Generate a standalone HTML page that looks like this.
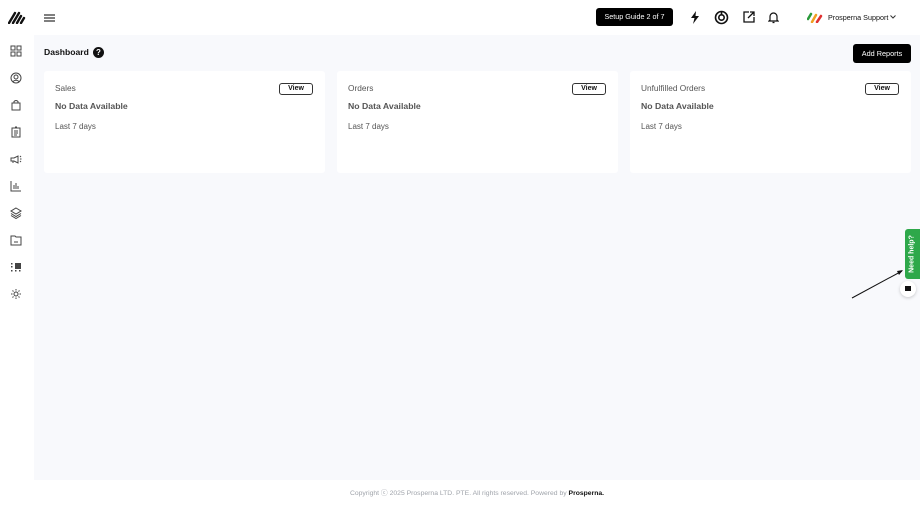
<!DOCTYPE html>
<html><head><meta charset="utf-8"><style>
*{box-sizing:border-box;margin:0;padding:0}
body{width:920px;height:515px;overflow:hidden;font-family:"Liberation Sans",sans-serif;background:#f8f9fc;position:relative}
.side{position:absolute;left:0;top:0;width:34px;height:515px;background:#fff}
.hdr{position:absolute;left:34px;top:0;width:886px;height:35px;background:#fff}
.foot{position:absolute;left:34px;top:480px;width:886px;height:35px;background:#fff;font-size:6.8px;color:#a0a4ab;text-align:center;line-height:27px}
.foot b{color:#111;font-weight:600}
.ic{position:absolute;left:10px;width:12px;height:12px}
.card{position:absolute;top:71px;width:281px;height:102px;background:#fff;border-radius:3px}
.card .t{position:absolute;left:11px;top:12px;font-size:8.3px;color:#555}
.card .n{position:absolute;left:11px;top:30px;font-size:8.7px;font-weight:bold;color:#555}
.card .l{position:absolute;left:11px;top:51px;font-size:8px;color:#555}
.card .v{position:absolute;right:12px;top:12px;width:34px;height:12px;border:1px solid #333;border-radius:3px;font-size:7px;font-weight:bold;text-align:center;line-height:10px;color:#111}
.btn{position:absolute;background:#000;color:#fff;font-size:7.2px;border-radius:3px;text-align:center}
</style></head><body>
<div class="side">
<svg style="position:absolute;left:8px;top:11px" width="19" height="13" viewBox="0 0 19 13"><path d="M1 12L7 2M5 12L11 2M9 12L13 5M13 12L16 7" stroke="#111" stroke-width="2.4" stroke-linecap="round"/></svg>
<svg class="ic" style="top:45px" viewBox="0 0 12 12" fill="none" stroke="#444" stroke-width="1"><rect x="1" y="1" width="4" height="4"/><rect x="7" y="1" width="4" height="4"/><rect x="1" y="7" width="4" height="4"/><rect x="7" y="7" width="4" height="4"/></svg>
<svg class="ic" style="top:72px" viewBox="0 0 12 12" fill="none" stroke="#444" stroke-width="1"><circle cx="6" cy="6" r="5"/><circle cx="6" cy="5" r="2"/><path d="M3 9.5Q6 7 9 9.5"/></svg>
<svg class="ic" style="top:99px" viewBox="0 0 12 12" fill="none" stroke="#444" stroke-width="1"><rect x="2" y="4" width="8" height="7"/><path d="M4 4V2.5Q6 0.5 8 2.5V4"/></svg>
<svg class="ic" style="top:126px" viewBox="0 0 12 12" fill="none" stroke="#444" stroke-width="1"><rect x="2" y="2" width="8" height="9"/><path d="M4 5h4M4 7h4M4 9h3M5 1h2"/></svg>
<svg class="ic" style="top:153px" viewBox="0 0 12 12" fill="none" stroke="#444" stroke-width="1"><path d="M1 5h3l4-2v7L4 8H1zM3 8v2M10 4l1-1M10 6h1.5M10 8l1 1"/></svg>
<svg class="ic" style="top:180px" viewBox="0 0 12 12" fill="none" stroke="#444" stroke-width="1"><path d="M1 1v10h10M4 9V5M6 9V3M8 9V6"/></svg>
<svg class="ic" style="top:207px" viewBox="0 0 12 12" fill="none" stroke="#444" stroke-width="1"><path d="M6 1l5 3-5 3-5-3zM1 6.5l5 3 5-3M1 8.5l5 3 5-3"/></svg>
<svg class="ic" style="top:234px" viewBox="0 0 12 12" fill="none" stroke="#444" stroke-width="1"><path d="M1 2h4l1 1h5v8H1zM4 8h4"/></svg>
<svg class="ic" style="top:261px" viewBox="0 0 12 12" fill="#444"><rect x="5" y="2" width="6" height="6"/><rect x="1" y="2" width="1.5" height="1.5"/><rect x="1" y="5" width="1.5" height="1.5"/><rect x="1" y="9" width="1.5" height="1.5"/><rect x="5" y="9" width="1.5" height="1.5"/><rect x="9" y="9" width="1.5" height="1.5"/></svg>
<svg class="ic" style="top:288px" viewBox="0 0 12 12" fill="none" stroke="#444" stroke-width="1"><circle cx="6" cy="6" r="2"/><path d="M6 1v1.5M6 9.5V11M1 6h1.5M9.5 6H11M2.5 2.5l1 1M8.5 8.5l1 1M2.5 9.5l1-1M8.5 3.5l1-1"/></svg>
</div>
<div class="hdr">
<svg style="position:absolute;left:10px;top:14px" width="11" height="8" viewBox="0 0 11 8"><path d="M0 1h11M0 4h11M0 7h11" stroke="#333" stroke-width="1.2"/></svg>
<div class="btn" style="left:562px;top:8px;width:77px;height:18px;line-height:18px">Setup Guide 2 of 7</div>
<svg style="position:absolute;left:656px;top:11px" width="10" height="13" viewBox="0 0 10 13"><path d="M6 0L1 7h3.5L3 13l6-8H5.5z" fill="#111"/></svg>
<svg style="position:absolute;left:680px;top:10px" width="15" height="15" viewBox="0 0 15 15" fill="none" stroke="#111" stroke-width="1.6"><circle cx="7.5" cy="7.5" r="6"/><circle cx="7.5" cy="7.5" r="2.7"/><path d="M7.5 1.5v3.3"/></svg>
<svg style="position:absolute;left:709px;top:11px" width="12" height="12" viewBox="0 0 12 12" fill="none" stroke="#111" stroke-width="1.3"><path d="M6 1H1v10h10V6M5 7l6-6M7 1h4v4"/></svg>
<svg style="position:absolute;left:734px;top:11px" width="11" height="13" viewBox="0 0 11 13" fill="none" stroke="#111" stroke-width="1.2"><path d="M2 9V5.5a3.5 3.5 0 017 0V9l1 1H1zM4.5 11.5h2"/></svg>
<svg style="position:absolute;left:773px;top:12px" width="16" height="11" viewBox="0 0 16 11"><path d="M1 7l3-5" stroke-width="2.5" stroke-linecap="round" stroke="#2a9a3a"/><path d="M5 10l4-7" stroke="#f0a020" stroke-width="2.5" stroke-linecap="round"/><path d="M10 10l4-6" stroke="#e03030" stroke-width="2.5" stroke-linecap="round"/></svg>
<div style="position:absolute;left:794px;top:13px;font-size:7.2px;color:#111">Prosperna Support</div>
<svg style="position:absolute;left:856px;top:15px" width="6" height="4" viewBox="0 0 6 4"><path d="M0.5 0.5l2.5 2.5 2.5-2.5" stroke="#333" fill="none"/></svg>
</div>
<div style="position:absolute;left:44px;top:47px;font-size:8.6px;font-weight:bold;color:#111">Dashboard</div>
<div style="position:absolute;left:93px;top:47px;width:11px;height:11px;border-radius:50%;background:#111;color:#fff;font-size:8px;font-weight:bold;text-align:center;line-height:11px">?</div>
<div class="btn" style="left:853px;top:44px;width:58px;height:19px;line-height:19px;font-size:7.3px">Add Reports</div>
<div class="card" style="left:44px"><div class="t">Sales</div><div class="n">No Data Available</div><div class="l">Last 7 days</div><div class="v">View</div></div>
<div class="card" style="left:337px"><div class="t">Orders</div><div class="n">No Data Available</div><div class="l">Last 7 days</div><div class="v">View</div></div>
<div class="card" style="left:630px"><div class="t">Unfulfilled Orders</div><div class="n">No Data Available</div><div class="l">Last 7 days</div><div class="v">View</div></div>
<div style="position:absolute;left:905px;top:229px;width:15px;height:50px;background:#2ea84a;border-radius:3px 0 0 3px"></div>
<div style="position:absolute;left:889px;top:249px;width:47px;height:10px;transform:rotate(-90deg);font-size:7px;font-weight:bold;color:#fff;text-align:center;line-height:10px">Need help?</div>
<div style="position:absolute;left:900px;top:281px;width:16px;height:16px;border-radius:50%;background:#fff;box-shadow:0 1px 3px rgba(0,0,0,.2)"><div style="position:absolute;left:5px;top:5px;width:6px;height:5px;background:#111"></div></div>
<svg style="position:absolute;left:850px;top:268px" width="55" height="32" viewBox="0 0 55 32"><path d="M2 30L52 3" stroke="#111" stroke-width="1"/><path d="M53 2l-6 1 2 4z" fill="#111"/></svg>
<div class="foot">Copyright ⓒ 2025 Prosperna LTD. PTE. All rights reserved. Powered by <b>Prosperna.</b></div>
</body></html>
